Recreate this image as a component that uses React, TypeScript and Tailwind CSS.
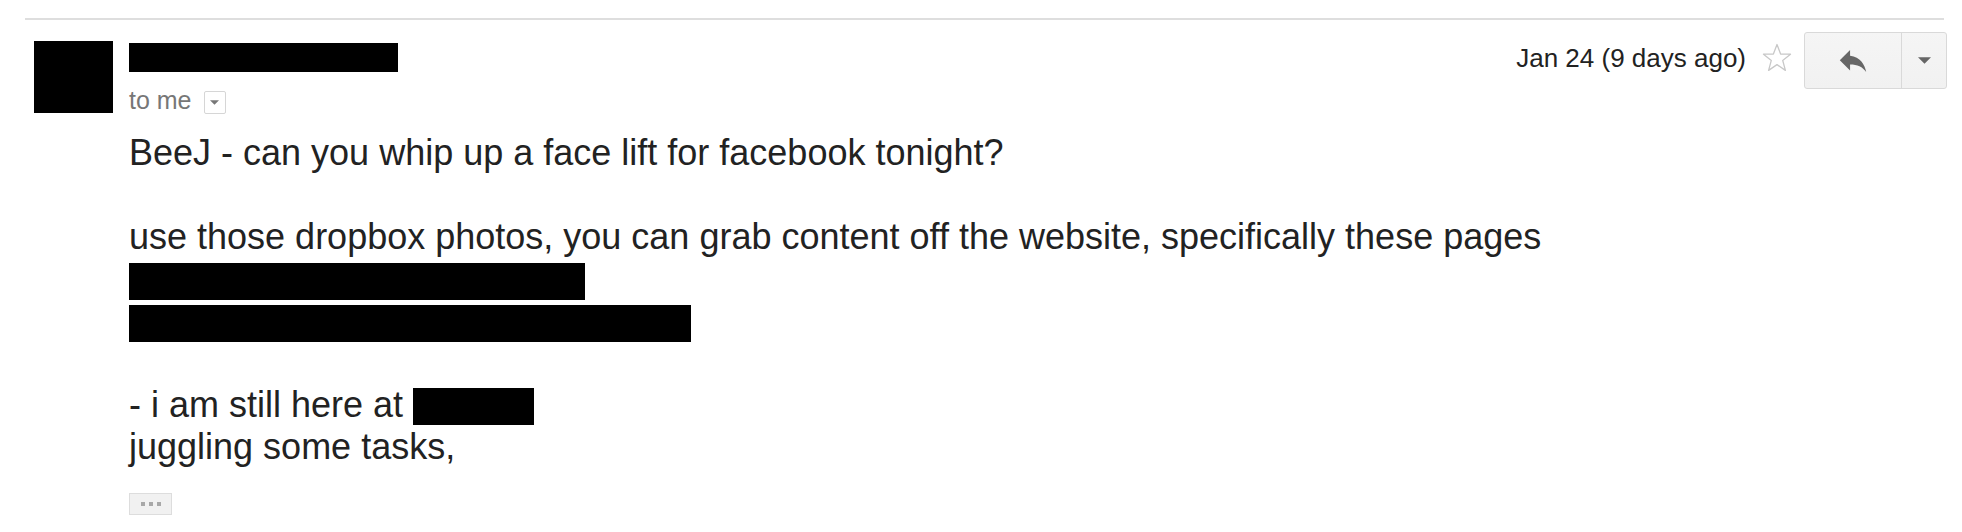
import React from "react";

const font = { fontFamily: '"Liberation Sans", Arial, sans-serif' };

// --- ICONS ---
const ReplyIcon = () => (
  <svg width="28" height="22" viewBox="3 5 18 15" fill="#666">
    <path d="M10 9V5l-7 7 7 7v-4.1c5 0 8.5 1.6 11 5.1-1-5-4-10-11-11z" />
  </svg>
);

const StarIcon = () => (
  <svg width="30" height="30" viewBox="0 0 30 30">
    <polygon
      points="15,1.5 18.6,11 28.5,11.2 20.7,17.4 23.4,27.4 15,21.6 6.6,27.4 9.3,17.4 1.5,11.2 11.4,11"
      fill="none"
      stroke="#c8c8c8"
      strokeWidth="1.3"
      strokeLinejoin="round"
    />
  </svg>
);

const Caret = ({ w, h, color }: { w: number; h: number; color: string }) => (
  <svg width={w} height={h} viewBox="0 0 10 5">
    <polygon points="0,0 10,0 5,5" fill={color} />
  </svg>
);

const Redacted = ({ className }: { className: string }) => (
  <span className={`inline-block bg-black align-top ${className}`} />
);

// --- MESSAGE ---
export default function App() {
  return (
    <div className="w-full h-[532px] bg-white text-[#222] overflow-hidden" style={font}>
      <div className="pt-[18px] pl-[25px] pr-[18px]">
        <div className="h-[2px] bg-[#dedede]" />
      </div>

      <div className="flex pt-[12px] pr-[15px]">
        {/* avatar */}
        <div className="ml-[34px] mt-[9px] w-[79px] h-[72px] bg-black shrink-0" />

        <div className="ml-[16px] flex-1 flex flex-col">
          {/* header */}
          <div className="flex items-start justify-between">
            <div className="flex flex-col">
              <div className="mt-[11px] w-[269px] h-[29px] bg-black" />
              <div className="mt-[13px] flex items-center h-[30px]">
                <span className="text-[25px] leading-[30px] text-[#777]">to me</span>
                <span className="ml-[12px] mt-[4px] w-[22px] h-[23px] border border-[#d6d6d6] rounded-[2px] bg-white flex items-center justify-center">
                  <Caret w={9} h={5} color="#777" />
                </span>
              </div>
            </div>

            <div className="flex items-start">
              <span className="mt-[11px] text-[26px] leading-[30px] text-[#222]">
                Jan 24 (9 days ago)
              </span>
              <span className="ml-[16px] mt-[11px] w-[30px] h-[30px] flex">
                <StarIcon />
              </span>
              <div className="ml-[12px] flex h-[57px] border border-[#d9d9d9] rounded-[3px] bg-gradient-to-b from-[#f5f5f5] to-[#f1f1f1]">
                <div className="w-[97px] flex items-center justify-center border-r border-[#d9d9d9]">
                  <ReplyIcon />
                </div>
                <div className="w-[44px] flex items-center justify-center">
                  <Caret w={13} h={7} color="#666" />
                </div>
              </div>
            </div>
          </div>

          {/* body */}
          <div className="mt-[17px] text-[36px] leading-[42px] text-[#222]">
            <div className="h-[42px]">BeeJ - can you whip up a face lift for facebook tonight?</div>
            <div className="h-[42px]" />
            <div className="h-[42px]">
              use those dropbox photos, you can grab content off the website, specifically these pages
            </div>
            <div className="h-[42px] pt-[5px]">
              <Redacted className="w-[456px] h-[37px]" />
            </div>
            <div className="h-[42px] pt-[5px]">
              <Redacted className="w-[562px] h-[37px]" />
            </div>
            <div className="h-[42px]" />
            <div className="h-[42px] flex items-start">
              <span>- i am still here at&nbsp;</span>
              <Redacted className="mt-[4px] w-[121px] h-[37px]" />
            </div>
            <div className="h-[42px]">juggling some tasks,</div>
          </div>

          {/* trimmed content */}
          <div className="mt-[25px] w-[43px] h-[22px] bg-[#f1f1f1] border border-[#dddddd] flex items-center justify-center gap-[4px]">
            <span className="w-[4px] h-[4px] bg-[#a8a8a8]" />
            <span className="w-[4px] h-[4px] bg-[#a8a8a8]" />
            <span className="w-[4px] h-[4px] bg-[#a8a8a8]" />
          </div>
        </div>
      </div>
    </div>
  );
}
